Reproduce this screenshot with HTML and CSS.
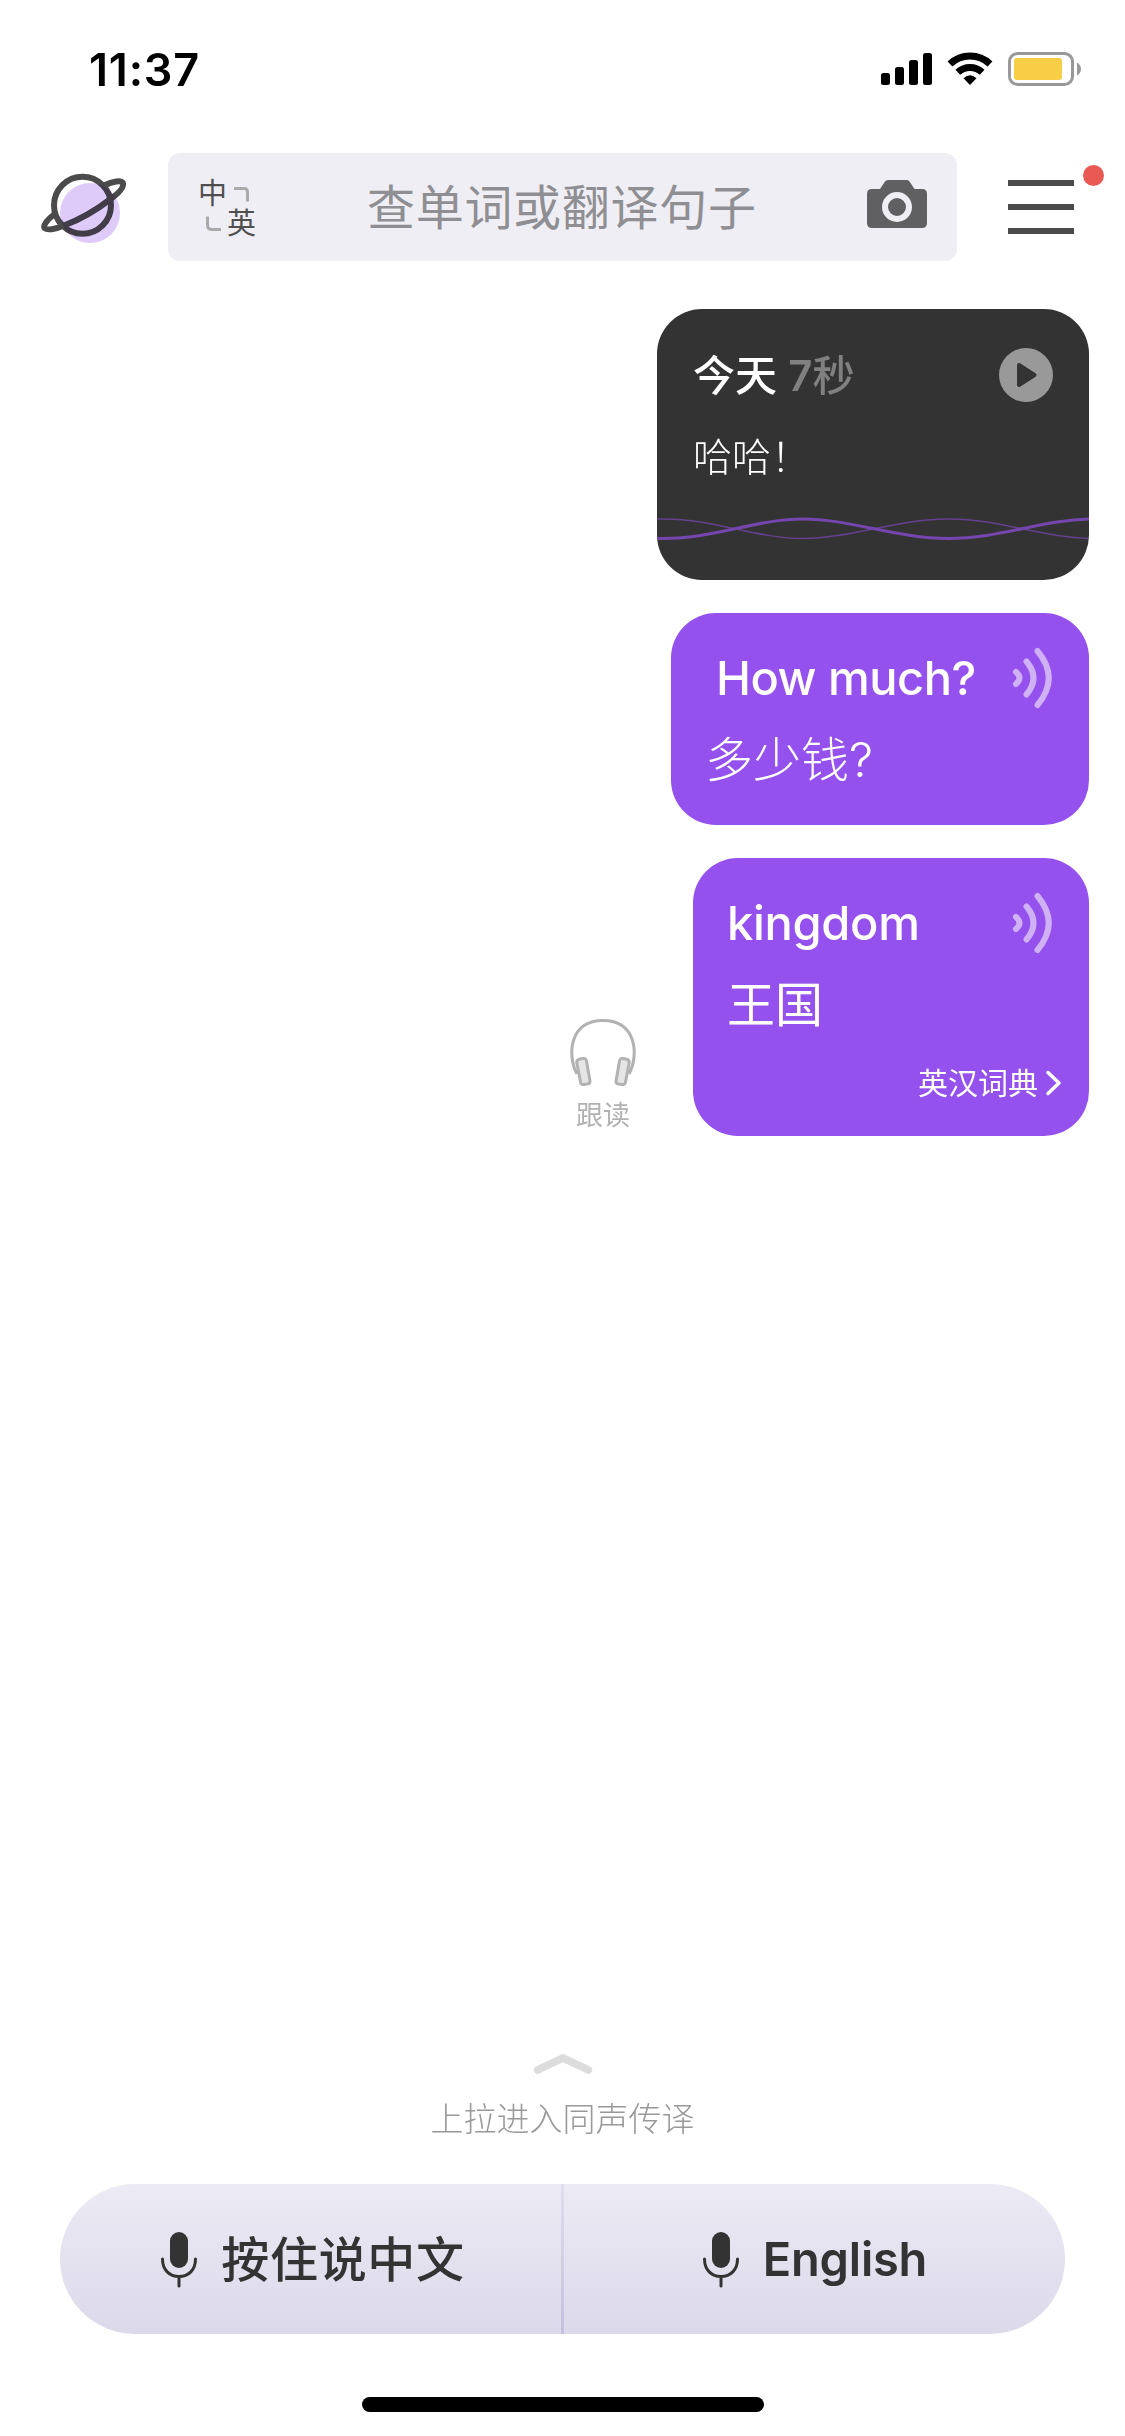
FILE: index.html
```html
<!DOCTYPE html>
<html lang="zh-CN">

<head>
    <meta charset="UTF-8">
    <meta name="viewport" content="width=device-width, initial-scale=1.0">
    <title>翻译</title>
    <link rel="stylesheet" href="styles.css">
</head>

<body>
    <div class="status-bar">
        <span class="time">11:37</span>
        <svg class="status-icons" width="202" height="36" viewBox="880 51 202 36">
            <rect x="881" y="73" width="9" height="12" rx="2.5" />
            <rect x="895" y="67" width="9" height="18" rx="2.5" />
            <rect x="909" y="60" width="9" height="25" rx="2.5" />
            <rect x="923" y="53" width="9" height="32" rx="2.5" />
            <g fill="none" stroke="#000" stroke-width="7">
                <path d="M950 64A29 29 0 0 1 990 64" />
                <path d="M957.8 72.3A18 18 0 0 1 982.2 72.3" />
            </g>
            <path d="M963.5 78.2Q970 72.5 976.5 78.2L970 85Z" />
            <rect x="1009.5" y="53.5" width="63" height="31" rx="8" fill="none" stroke="#999" stroke-width="3" />
            <rect x="1014" y="58" width="48" height="22" rx="3" fill="#f8ce46" />
            <path d="M1077 62.5Q1081 65 1081 69T1077 75.500Z" fill="#999" />
        </svg>
    </div>

    <header class="top-bar">
        <svg class="planet" width="90" height="76" viewBox="39 170 90 76">
            <circle cx="90" cy="213" r="30" fill="#decbf9" />
            <g fill="none" stroke="#4b4b4b" stroke-width="6" class="planet-lines">
                <circle cx="82.500" cy="205.300" r="28.500" />
                <path d="M104 185.500C113 181 121 180 122.800 182.800C124.500 187 119 193 110 199.500C95 211 80 219.500 64 225.500C55 229.500 46.500 230.500 44.500 228C43 225 47 220 54 214.500" />
            </g>
        </svg>
        <div class="search">
            <div class="lang-switch">
                <span>中</span>
                <svg width="16" height="16" viewBox="0 0 16 16"><path d="M0 2.500H10Q13.500 2.500 13.500 6V15.500" /></svg>
                <svg width="16" height="16" viewBox="0 0 16 16"><path d="M2.500 0.500V9Q2.500 13.500 7 13.500H16" /></svg>
                <span>英</span>
            </div>
            <span class="placeholder">查单词或翻译句子</span>
            <svg class="camera" width="60" height="48" viewBox="0 0 60 48">
                <path fill="#606062" d="M5 9H13L18 1.500Q19 0 21 0H40Q41.500 0 42.500 1.500L47.500 9H55Q60 9 60 14V43Q60 48 55 48H5Q0 48 0 43V14Q0 9 5 9Z" />
                <circle cx="30" cy="27" r="12" fill="none" stroke="#efeef4" stroke-width="6" />
            </svg>
        </div>
        <div class="menu">
            <i></i><i></i><i></i>
            <b class="dot"></b>
        </div>
    </header>

    <main class="messages">
        <div class="card voice">
            <div class="card-head">
                <p class="when">今天 <span><b>7</b>秒</span></p>
                <svg width="54" height="54" viewBox="0 0 54 54">
                    <circle cx="27" cy="27" r="27" fill="#999" />
                    <path d="M20 17L35.500 27L20 37Z" fill="#333" stroke="#333" stroke-width="4" stroke-linejoin="round" />
                </svg>
            </div>
            <p class="said">哈哈！</p>
            <svg class="wave" width="432" height="24" viewBox="0 0 432 24">
                <path d="M-140 2C-87 2 -47 21.500 6 21.500S99 2 146 2S239 21.500 292 21.500S385 2 438 2" stroke-width="3" />
                <path d="M-140 21.500C-87 21.500 -47 2 6 2S99 21.500 146 21.500S239 2 292 2S385 21.500 438 21.500" stroke-width="1.500" opacity="0.75" />
            </svg>
        </div>

        <div class="card phrase">
            <div class="card-head">
                <p class="en">How much?</p>
                <svg class="sound" width="42" height="62" viewBox="0 0 42 62"><path d="M5 25Q12 31 5 37M15.500 14.500Q29.500 31 15.500 47.500M26.500 4Q49 31 26.500 58" /></svg>
            </div>
            <p class="zh light">多少钱?</p>
        </div>

        <div class="row">
            <div class="follow">
                <svg width="68" height="68" viewBox="0 0 68 68">
                    <path d="M8 56C-2 38 0 2.500 34 2.500S70 38 60 56" fill="none" stroke="#b2b2b2" stroke-width="3" />
                    <g fill="#e5e5e5" stroke="#b2b2b2" stroke-width="3" stroke-linejoin="round">
                        <path d="M8 46Q7 42 11 41L14 40.500Q17 40 17.500 43L21 63Q21 66 18 66L15 66.500Q12 67 11.500 64Z" />
                        <path d="M60 46Q61 42 57 41L54 40.500Q51 40 50.500 43L47 63Q47 66 50 66L53 66.500Q56 67 56.500 64Z" />
                    </g>
                </svg>
                <span>跟读</span>
            </div>
            <div class="card word">
                <div class="card-head">
                    <p class="en">kingdom</p>
                    <svg class="sound" width="42" height="62" viewBox="0 0 42 62"><path d="M5 25Q12 31 5 37M15.500 14.500Q29.500 31 15.500 47.500M26.500 4Q49 31 26.500 58" /></svg>
                </div>
                <p class="zh">王国</p>
                <div class="dict">
                    <span>英汉词典</span>
                    <svg width="18" height="26" viewBox="0 0 18 26"><path d="M3 2.500L14 13L3 23.500" fill="none" stroke="#fff" stroke-width="3.500" stroke-linecap="round" stroke-linejoin="round" /></svg>
                </div>
            </div>
        </div>
    </main>

    <footer>
        <svg class="pull-up" width="60" height="22" viewBox="0 0 60 22"><path d="M4.500 17L30 5L55.500 17" /></svg>
        <p class="hint">上拉进入同声传译</p>
        <div class="talk-bar">
            <div class="talk">
                <svg class="mic" width="36" height="56" viewBox="0 0 36 56">
                    <rect x="9" y="0" width="18" height="36" rx="9" fill="#333" />
                    <path d="M1.500 27C1.500 38 8.500 44.500 18 44.500S34.500 38 34.500 27M18 44.500V54" />
                </svg>
                <span class="talk-zh">按住说中文</span>
            </div>
            <div class="divider"></div>
            <div class="talk">
                <svg class="mic" width="36" height="56" viewBox="0 0 36 56">
                    <rect x="9" y="0" width="18" height="36" rx="9" fill="#333" />
                    <path d="M1.500 27C1.500 38 8.500 44.500 18 44.500S34.500 38 34.500 27M18 44.500V54" />
                </svg>
                <span class="talk-en">English</span>
            </div>
        </div>
        <div class="home-indicator"></div>
    </footer>
</body>

</html>
```
FILE: styles.css
```css
* {
    box-sizing: border-box;
}

body {
    margin: 0;
    height: 2436px;
    display: flex;
    flex-direction: column;
    background-color: #fff;
    font-family: Inter, "Noto Sans CJK SC", sans-serif;
    overflow: hidden;
}

p {
    margin: 0;
}

svg {
    display: block;
    flex: none;
}

/* status bar */
.status-bar {
    height: 153px;
    padding: 51px 43px 0 89px;
    display: flex;
    justify-content: space-between;
    align-items: flex-start;
}

.time {
    font-size: 45px;
    font-weight: 600;
    line-height: 37px;
    letter-spacing: 0.8px;
}

/* search header */
.top-bar {
    height: 108px;
    padding: 0 51px 0 39px;
    display: flex;
    align-items: center;
}

.planet {
    margin-top: 2px;
}

.planet-lines {
    mix-blend-mode: multiply;
}

.search {
    width: 789px;
    height: 108px;
    margin-left: 39px;
    padding: 0 30px 0 30px;
    display: flex;
    align-items: center;
    background-color: #efeef4;
    border-radius: 12px;
}

.lang-switch {
    display: grid;
    grid-template-columns: 29px 29px;
    grid-template-rows: 30px 30px;
    align-items: center;
    justify-items: center;
    padding-top: 3px;
    color: #505050;
    font-size: 29px;
    line-height: 30px;
}

.lang-switch path {
    fill: none;
    stroke: #aaa;
    stroke-width: 3;
}

.placeholder {
    flex: 1;
    margin-left: 111px;
    padding-top: 2px;
    color: #8e8e93;
    font-size: 48px;
    line-height: 60px;
    letter-spacing: 0.7px;
}

.camera {
    margin-top: -6px;
}

.menu {
    position: relative;
    width: 66px;
    margin-left: 51px;
    display: flex;
    flex-direction: column;
    gap: 18px;
}

.menu i {
    height: 6px;
    background-color: #4b4b4b;
}

.dot {
    position: absolute;
    top: -15px;
    right: -30px;
    width: 21px;
    height: 21px;
    border-radius: 50%;
    background-color: #ea5a55;
}

/* messages */
.messages {
    flex: 1;
    padding: 48px 36px 0 0;
    display: flex;
    flex-direction: column;
    align-items: flex-end;
    gap: 33px;
}

.card {
    color: #fff;
    background-color: #9451ed;
    border-radius: 45px;
    overflow: hidden;
}

.card-head {
    display: flex;
    justify-content: space-between;
    align-items: center;
}

.voice {
    width: 432px;
    height: 271px;
    background-color: #333;
}

.voice .card-head {
    padding: 39px 36px 0;
}

.when {
    padding-top: 2px;
    font-size: 42px;
    font-weight: 500;
    line-height: 52px;
}

.when span {
    color: #808080;
}

.when b {
    font-weight: 600;
}

.said {
    padding: 30px 36px 0;
    font-size: 39px;
    font-weight: 300;
    line-height: 50px;
}

.wave {
    margin-top: 35px;
}

.wave path {
    fill: none;
    stroke: #7546ae;
}

.phrase {
    width: 418px;
    height: 212px;
    padding: 34px 36px 0;
}

.phrase .en {
    padding-left: 9px;
    letter-spacing: -0.5px;
}

.en {
    font-size: 47px;
    font-weight: 500;
    line-height: 62px;
    letter-spacing: -0.3px;
}

.sound path {
    fill: none;
    stroke: #d0b1f6;
    stroke-width: 6;
    stroke-linecap: round;
}

.zh {
    margin-top: 21px;
    font-size: 48px;
    line-height: 60px;
}

.light {
    margin-left: -2px;
    font-weight: 300;
}

.row {
    display: flex;
    align-items: flex-end;
}

.follow {
    width: 68px;
    margin-right: 56px;
    padding-bottom: 2px;
    display: flex;
    flex-direction: column;
    align-items: center;
    gap: 12px;
    color: #b2b2b2;
    font-size: 27px;
    line-height: 36px;
}

.word {
    width: 396px;
    height: 278px;
    padding: 34px 26px 0 34px;
}

.word .card-head {
    padding-right: 10px;
}

.dict {
    margin-top: 28px;
    display: flex;
    justify-content: flex-end;
    align-items: center;
    gap: 7px;
    font-size: 30px;
    line-height: 40px;
}

/* bottom */
footer {
    display: flex;
    flex-direction: column;
    align-items: center;
}

.pull-up path {
    fill: none;
    stroke: #dcdcdc;
    stroke-width: 7.5;
    stroke-linecap: round;
}

.hint {
    margin: 23px 0 43px;
    color: #999;
    font-size: 33px;
    font-weight: 300;
    line-height: 43px;
}

.talk-bar {
    width: 1005px;
    height: 150px;
    display: flex;
    border-radius: 75px;
    overflow: hidden;
    background: linear-gradient(#eceaf4, #dcd9ea);
}

.talk {
    flex: 1;
    padding: 2px 0 0 5px;
    display: flex;
    align-items: center;
    justify-content: center;
    gap: 24px;
    color: #333;
    font-size: 48px;
    line-height: 60px;
}

.divider {
    width: 3px;
    background: linear-gradient(#e0dded, #c5c0df);
}

.mic path {
    fill: none;
    stroke: #333;
    stroke-width: 3;
    stroke-linecap: round;
}

.talk-zh {
    font-weight: 500;
    letter-spacing: 0.7px;
}

.talk-en {
    margin: -3px 4px 0 0;
    font-size: 47px;
    font-weight: 600;
    letter-spacing: -0.2px;
}

.home-indicator {
    width: 402px;
    height: 15px;
    margin: 63px 0 24px;
    border-radius: 7.5px;
    background-color: #000;
}
```
